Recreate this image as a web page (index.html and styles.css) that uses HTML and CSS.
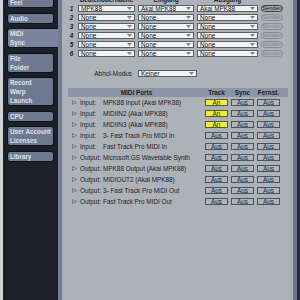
FILE: index.html
```html
<!DOCTYPE html>
<html>
  <head>
    <meta charset="utf-8">
    <title>Preferences - MIDI Sync</title>
    <link rel="stylesheet" href="styles.css">
  </head>
  <body>
    <div class="window">
      <div class="desk"></div>

      <nav class="tabs">
        <div class="tab">Feel</div>
        <div class="tab">Audio</div>
        <div class="tab active">MIDI<br>Sync</div>
        <div class="tab">File<br>Folder</div>
        <div class="tab">Record<br>Warp<br>Launch</div>
        <div class="tab">CPU</div>
        <div class="tab">User Account<br>Licenses</div>
        <div class="tab">Library</div>
      </nav>

      <main class="prefs">
        <section class="surfaces">
          <div></div>
          <div class="col-head">Bedienoberfläche</div>
          <div class="col-head">Eingang</div>
          <div class="col-head">Ausgang</div>
          <div></div>

          <div class="num">1</div>
          <div class="dropdown">MPK88<svg class="arrow" width="5" height="3"><polygon points="0,0 5,0 2.5,3"/></svg></div>
          <div class="dropdown">Akai MPK88<svg class="arrow" width="5" height="3"><polygon points="0,0 5,0 2.5,3"/></svg></div>
          <div class="dropdown">Akai MPK88<svg class="arrow" width="5" height="3"><polygon points="0,0 5,0 2.5,3"/></svg></div>
          <div class="send">Senden</div>

          <div class="num">2</div>
          <div class="dropdown">None<svg class="arrow" width="5" height="3"><polygon points="0,0 5,0 2.5,3"/></svg></div>
          <div class="dropdown">None<svg class="arrow" width="5" height="3"><polygon points="0,0 5,0 2.5,3"/></svg></div>
          <div class="dropdown">None<svg class="arrow" width="5" height="3"><polygon points="0,0 5,0 2.5,3"/></svg></div>
          <div class="send off">Senden</div>

          <div class="num">3</div>
          <div class="dropdown">None<svg class="arrow" width="5" height="3"><polygon points="0,0 5,0 2.5,3"/></svg></div>
          <div class="dropdown">None<svg class="arrow" width="5" height="3"><polygon points="0,0 5,0 2.5,3"/></svg></div>
          <div class="dropdown">None<svg class="arrow" width="5" height="3"><polygon points="0,0 5,0 2.5,3"/></svg></div>
          <div class="send off">Senden</div>

          <div class="num">4</div>
          <div class="dropdown">None<svg class="arrow" width="5" height="3"><polygon points="0,0 5,0 2.5,3"/></svg></div>
          <div class="dropdown">None<svg class="arrow" width="5" height="3"><polygon points="0,0 5,0 2.5,3"/></svg></div>
          <div class="dropdown">None<svg class="arrow" width="5" height="3"><polygon points="0,0 5,0 2.5,3"/></svg></div>
          <div class="send off">Senden</div>

          <div class="num">5</div>
          <div class="dropdown">None<svg class="arrow" width="5" height="3"><polygon points="0,0 5,0 2.5,3"/></svg></div>
          <div class="dropdown">None<svg class="arrow" width="5" height="3"><polygon points="0,0 5,0 2.5,3"/></svg></div>
          <div class="dropdown">None<svg class="arrow" width="5" height="3"><polygon points="0,0 5,0 2.5,3"/></svg></div>
          <div class="send off">Senden</div>

          <div class="num">6</div>
          <div class="dropdown">None<svg class="arrow" width="5" height="3"><polygon points="0,0 5,0 2.5,3"/></svg></div>
          <div class="dropdown">None<svg class="arrow" width="5" height="3"><polygon points="0,0 5,0 2.5,3"/></svg></div>
          <div class="dropdown">None<svg class="arrow" width="5" height="3"><polygon points="0,0 5,0 2.5,3"/></svg></div>
          <div class="send off">Senden</div>
        </section>

        <div class="takeover">
          <div class="takeover-label">Abhol-Modus</div>
          <div class="dropdown">Keiner<svg class="arrow" width="5" height="3"><polygon points="0,0 5,0 2.5,3"/></svg></div>
        </div>

        <section class="ports">
          <div class="port-row ports-head">
            <div class="head-title">MIDI Ports</div>
            <div class="head-cell">Track</div>
            <div class="head-cell">Sync</div>
            <div class="head-cell">Fernst.</div>
          </div>

          <div class="port-row">
            <svg class="expand" width="5" height="5"><polygon points="0.5,0.5 4.5,2.5 0.5,4.5"/></svg>
            <div>Input:</div><div>MPK88 Input (Akai MPK88)</div>
            <div><span class="toggle on">An</span></div><div><span class="toggle">Aus</span></div><div><span class="toggle">Aus</span></div>
          </div>
          <div class="port-row">
            <svg class="expand" width="5" height="5"><polygon points="0.5,0.5 4.5,2.5 0.5,4.5"/></svg>
            <div>Input:</div><div>MIDIIN2 (Akai MPK88)</div>
            <div><span class="toggle on">An</span></div><div><span class="toggle">Aus</span></div><div><span class="toggle">Aus</span></div>
          </div>
          <div class="port-row">
            <svg class="expand" width="5" height="5"><polygon points="0.5,0.5 4.5,2.5 0.5,4.5"/></svg>
            <div>Input:</div><div>MIDIIN3 (Akai MPK88)</div>
            <div><span class="toggle on">An</span></div><div><span class="toggle">Aus</span></div><div><span class="toggle">Aus</span></div>
          </div>
          <div class="port-row">
            <svg class="expand" width="5" height="5"><polygon points="0.5,0.5 4.5,2.5 0.5,4.5"/></svg>
            <div>Input:</div><div>3- Fast Track Pro MIDI In</div>
            <div><span class="toggle">Aus</span></div><div><span class="toggle">Aus</span></div><div><span class="toggle">Aus</span></div>
          </div>
          <div class="port-row">
            <svg class="expand" width="5" height="5"><polygon points="0.5,0.5 4.5,2.5 0.5,4.5"/></svg>
            <div>Input:</div><div>Fast Track Pro MIDI In</div>
            <div><span class="toggle">Aus</span></div><div><span class="toggle">Aus</span></div><div><span class="toggle">Aus</span></div>
          </div>
          <div class="port-row">
            <svg class="expand" width="5" height="5"><polygon points="0.5,0.5 4.5,2.5 0.5,4.5"/></svg>
            <div>Output:</div><div>Microsoft GS Wavetable Synth</div>
            <div><span class="toggle">Aus</span></div><div><span class="toggle">Aus</span></div><div><span class="toggle">Aus</span></div>
          </div>
          <div class="port-row">
            <svg class="expand" width="5" height="5"><polygon points="0.5,0.5 4.5,2.5 0.5,4.5"/></svg>
            <div>Output:</div><div>MPK88 Output (Akai MPK88)</div>
            <div><span class="toggle">Aus</span></div><div><span class="toggle">Aus</span></div><div><span class="toggle">Aus</span></div>
          </div>
          <div class="port-row">
            <svg class="expand" width="5" height="5"><polygon points="0.5,0.5 4.5,2.5 0.5,4.5"/></svg>
            <div>Output:</div><div>MIDIOUT2 (Akai MPK88)</div>
            <div><span class="toggle">Aus</span></div><div><span class="toggle">Aus</span></div><div><span class="toggle">Aus</span></div>
          </div>
          <div class="port-row">
            <svg class="expand" width="5" height="5"><polygon points="0.5,0.5 4.5,2.5 0.5,4.5"/></svg>
            <div>Output:</div><div>3- Fast Track Pro MIDI Out</div>
            <div><span class="toggle">Aus</span></div><div><span class="toggle">Aus</span></div><div><span class="toggle">Aus</span></div>
          </div>
          <div class="port-row">
            <svg class="expand" width="5" height="5"><polygon points="0.5,0.5 4.5,2.5 0.5,4.5"/></svg>
            <div>Output:</div><div>Fast Track Pro MIDI Out</div>
            <div><span class="toggle">Aus</span></div><div><span class="toggle">Aus</span></div><div><span class="toggle">Aus</span></div>
          </div>
        </section>
      </main>

      <div class="edge"></div>
    </div>
  </body>
</html>
```

FILE: styles.css
```css
body {
  margin: 0;
  width: 300px;
  height: 300px;
  overflow: hidden;
  background: #1c2029;
  font-family: "Liberation Sans", Arial, sans-serif;
  font-size: 6.4px;
  color: #1e2127;
}
.window {
  display: flex;
  height: 300px;
}
.desk {
  width: 3px;
  background: #d3d4d6;
}

/* left tab column */
.tabs {
  width: 55px;
  padding-left: 4px;
  box-sizing: border-box;
  display: flex;
  flex-direction: column;
  gap: 4.5px;
  margin-top: -3px;
}
.tab {
  width: 47px;
  box-sizing: border-box;
  border: 1px solid #0d1015;
  border-radius: 3px;
  background: #6e7891;
  color: #dfe3ea;
  font-size: 6.3px;
  font-weight: bold;
  line-height: 9px;
  padding-left: 2px;
  white-space: nowrap;
  overflow: hidden;
}
.tab.active {
  width: 51px;
  background: #7a849c;
  border-right: none;
  border-radius: 3px 0 0 3px;
}

/* main panel */
.prefs {
  width: 239px;
  box-sizing: border-box;
  border-left: 4px solid #717b94;
  border-right: 4px solid #6b7490;
  background: #adb2b9;
  padding-left: 6px;
}
.edge {
  width: 3px;
  background: #262a33;
}

.surfaces {
  display: grid;
  grid-template-columns: 7px 57px 56px 61px 22px;
  grid-template-rows: 6px;
  grid-auto-rows: 7px;
  column-gap: 3px;
  row-gap: 2px;
  margin-top: -3px;
}
.col-head {
  text-align: center;
  font-weight: bold;
  line-height: 6px;
  white-space: nowrap;
}
.num {
  font-weight: bold;
  font-style: italic;
  text-align: center;
  line-height: 7px;
}
.dropdown {
  display: flex;
  align-items: center;
  justify-content: space-between;
  box-sizing: border-box;
  height: 7px;
  border: 1px solid #5a5e66;
  background: #f3f3f3;
  padding: 0 2px;
  line-height: 5px;
  color: #111;
}
.arrow {
  fill: #7d8189;
}
.send {
  box-sizing: border-box;
  height: 7px;
  border: 1px solid #3c4049;
  border-radius: 4px;
  background: #a4aab2;
  text-align: center;
  font-size: 5.6px;
  line-height: 5px;
  color: #1b1d22;
  white-space: nowrap;
}
.send.off {
  border-color: #8a8f97;
  color: #868b93;
  background: #a9aeb5;
}

.takeover {
  display: grid;
  grid-template-columns: 7px 57px 59px;
  column-gap: 3px;
  margin-top: 13px;
}
.takeover-label {
  grid-column: 1 / 3;
  text-align: right;
  padding-right: 3px;
  line-height: 7px;
}

.ports {
  width: 220px;
  margin-top: 11px;
}
.port-row {
  display: grid;
  grid-template-columns: 12px 23px 102px 26px 26px 1fr;
  align-items: center;
  height: 11px;
  white-space: nowrap;
}
.ports-head {
  height: 9px;
  background: #8d95a9;
  font-weight: bold;
}
.head-title {
  grid-column: 1 / 4;
  text-align: center;
}
.head-cell {
  width: 23px;
  text-align: center;
}
.expand {
  margin-left: 4px;
  fill: none;
  stroke: #6a7079;
  stroke-width: 0.8;
}
.toggle {
  display: block;
  box-sizing: border-box;
  width: 23px;
  height: 7px;
  border: 1px solid #4d525b;
  background: #b0b5bc;
  text-align: center;
  line-height: 5px;
  color: #24272d;
}
.toggle.on {
  background: #eded3c;
  border-color: #5a5a30;
}
```
